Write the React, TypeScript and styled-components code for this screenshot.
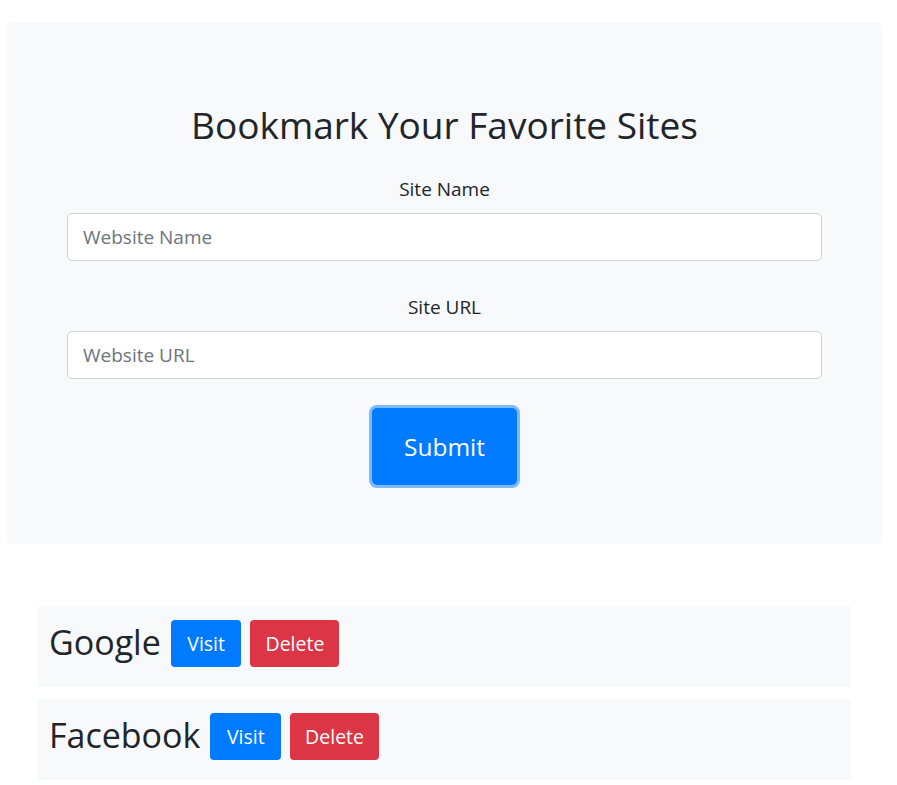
import React from "react";
import styled, { createGlobalStyle } from "styled-components";

const Global = createGlobalStyle`
  html, body { margin: 0; padding: 0; background: #fff; }
  body { font-family: "Open Sans", "Noto Sans", sans-serif; color: #212529; }
  * { box-sizing: border-box; }
`;

const Page = styled.div`
  display: flex;
  flex-direction: column;
  padding: 23px 15px 0 7px;
`;

const Jumbotron = styled.section`
  background: #f8f9fa;
  border-radius: 5px;
  height: 521px;
  display: flex;
  flex-direction: column;
  align-items: center;
  padding: 0 60px 0 60px;
`;

const Title = styled.h1`
  margin: 79px 0 0;
  font-size: 37px;
  font-weight: 400;
  line-height: 46px;
`;

const Label = styled.label<{ $top: number }>`
  margin-top: ${(p) => p.$top}px;
  font-size: 19px;
  line-height: 30px;
`;

const Input = styled.input`
  width: 100%;
  height: 48px;
  margin-top: 9px;
  padding: 0 15px;
  border: 1px solid #ced4da;
  border-radius: 5px;
  background: #fff;
  font-family: inherit;
  font-size: 19px;
  color: #495057;
  &::placeholder { color: #6c757d; }
`;

const SubmitButton = styled.button`
  margin-top: 29px;
  width: 145px;
  height: 77px;
  border: none;
  border-radius: 5px;
  background: #007bff;
  color: #fff;
  font-family: inherit;
  font-size: 24.5px;
  box-shadow: 0 0 0 3px rgba(0, 123, 255, 0.5);
`;

const List = styled.div`
  display: flex;
  flex-direction: column;
  gap: 12px;
  margin: 62px 0 0 31px;
  width: 813px;
`;

const Item = styled.div`
  background: #f8f9fa;
  height: 81px;
  display: flex;
  align-items: flex-start;
  padding: 14px 11px 0;
  gap: 9px;
`;

const ItemName = styled.h2`
  margin: 0 1px 0 0;
  font-size: 34px;
  font-weight: 400;
  line-height: 45px;
`;

const ActionButton = styled.button<{ $variant: "visit" | "delete" }>`
  height: 47px;
  padding: 0 ${(p) => (p.$variant === "visit" ? 16.5 : 15)}px;
  border: none;
  border-radius: 4px;
  background: ${(p) => (p.$variant === "visit" ? "#007bff" : "#dc3545")};
  color: #fff;
  font-family: inherit;
  font-size: 19.5px;
`;

const bookmarks = ["Google", "Facebook"];

export default function App() {
  return (
    <>
      <Global />
      <Page>
        <Jumbotron>
          <Title>Bookmark Your Favorite Sites</Title>
          <Label $top={26}>Site Name</Label>
          <Input placeholder="Website Name" />
          <Label $top={31}>Site URL</Label>
          <Input placeholder="Website URL" />
          <SubmitButton>Submit</SubmitButton>
        </Jumbotron>
        <List>
          {bookmarks.map((b) => (
            <Item key={b}>
              <ItemName>{b}</ItemName>
              <ActionButton $variant="visit">Visit</ActionButton>
              <ActionButton $variant="delete">Delete</ActionButton>
            </Item>
          ))}
        </List>
      </Page>
    </>
  );
}
